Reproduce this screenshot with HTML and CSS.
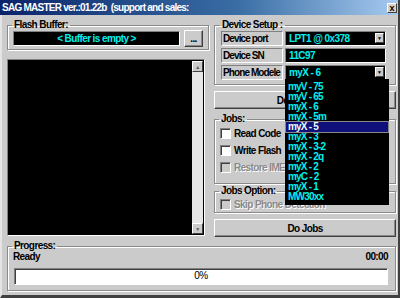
FILE: index.html
```html
<!DOCTYPE html>
<html lang="en">
<head>
<meta charset="UTF-8">
<title>SAG MASTER</title>
<link rel="stylesheet" href="styles.css">
</head>
<body>
<div class="window">
  <div class="titlebar">
    <span class="title">SAG MASTER ver.:01.22b&nbsp; (support and sales:</span>
    <span class="close">x</span>
  </div>
  <div class="client">
    <div class="top">
      <div class="leftCol">
        <fieldset class="group flash">
          <legend>Flash Buffer:</legend>
          <div class="flashRow">
            <div class="field">&lt; Buffer is empty &gt;</div>
            <button type="button" class="btn dots">...</button>
          </div>
        </fieldset>
        <div class="memo">
          <div class="scrollbar">
            <span class="arrow">&#9650;</span>
            <span class="arrow">&#9660;</span>
          </div>
        </div>
      </div>
      <div class="rightCol">
        <fieldset class="group device">
          <legend>Device Setup :</legend>
          <div class="devRows">
            <div class="cap">Device port</div>
            <div class="combo">LPT1 @ 0x378<span class="drop">&#9660;</span></div>
            <div class="cap">Device SN</div>
            <div class="combo">11C97</div>
            <div class="cap">Phone Modele</div>
            <div class="combo">myX - 6<span class="drop">&#9660;</span></div>
          </div>
        </fieldset>
        <button type="button" class="btn wide detect">Detect Phone</button>
        <fieldset class="group jobs">
          <legend>Jobs:</legend>
          <label class="check"><span class="box"></span>Read Code</label>
          <label class="check"><span class="box"></span>Write Flash</label>
          <label class="check off"><span class="box"></span>Restore IMEI</label>
        </fieldset>
        <fieldset class="group options">
          <legend>Jobs Option:</legend>
          <label class="check off"><span class="box"></span>Skip Phone Detection</label>
        </fieldset>
        <button type="button" class="btn wide dojobs">Do Jobs</button>
      </div>
    </div>
    <fieldset class="group progress">
      <legend>Progress:</legend>
      <div class="status"><span>Ready</span><span>00:00</span></div>
      <div class="bar">0%</div>
    </fieldset>
  </div>
  <ul class="dropList">
    <li>myV - 75</li>
    <li>myV - 65</li>
    <li>myX - 6</li>
    <li>myX - 5m</li>
    <li class="sel">myX - 5</li>
    <li>myX - 3</li>
    <li>myX - 3-2</li>
    <li>myX - 2q</li>
    <li>myX - 2</li>
    <li>myC - 2</li>
    <li>myX - 1</li>
    <li>MW30xx</li>
  </ul>
</div>
</body>
</html>
```

FILE: styles.css
```css
* { box-sizing:border-box; }
html, body { margin:0; padding:0; overflow:hidden; }
body { font-family:"Liberation Sans",Arial,sans-serif; font-size:10px; font-weight:bold; letter-spacing:-0.6px; color:#000; background:#c8c8c8; }
.window { position:relative; width:400px; height:298px; display:flex; flex-direction:column; background:#cbcbcb; border-right:2px solid #404040; border-bottom:3px solid #404040; border-left:2px solid #e4e4e4; }
.titlebar { height:15px; display:flex; align-items:center; justify-content:space-between; padding:0 1px 0 2px; margin-left:-2px; background:linear-gradient(90deg,#0a246a 0%,#3a6ea5 60%,#a6caf0 100%); color:#fff; }
.title { font-size:10px; letter-spacing:-0.75px; line-height:15px; white-space:nowrap; }
.close { width:10px; height:10px; background:#d4d0c8; color:#000; font-size:9px; letter-spacing:0; line-height:8px; text-align:center; border:1px solid; border-color:#fff #404040 #404040 #fff; }
.client { flex:1; display:flex; flex-direction:column; padding:5px 0 4px 5px; }
.top { display:grid; grid-template-columns:202px 182px; gap:5px; }
.leftCol, .rightCol { display:flex; flex-direction:column; }
.group { margin:0; padding:0 5px 2px 5px; border:1px solid #8a8a8a; box-shadow:1px 1px 0 #fff, inset 1px 1px 0 #fff; }
legend { padding:0 2px; margin-left:-1px; line-height:10px; height:10px; }
.flashRow { display:flex; align-items:center; gap:4px; height:17px; }
.field { width:167px; height:15px; background:#000; color:#00f0f0; text-align:center; line-height:14px; border:1px solid; border-color:#808080 #fff #fff #808080; }
.btn { font:inherit; letter-spacing:inherit; color:#000; background:#cbcbcb; border:1px solid; border-color:#fff #404040 #404040 #fff; box-shadow:inset -1px -1px 0 #888; padding:0; }
.dots { width:19px; height:17px; line-height:12px; }
.memo { flex:1; margin:9px 4px 1px 0; background:#000; border:1px solid; border-color:#808080 #fff #fff #808080; display:flex; justify-content:flex-end; padding:1px; }
.scrollbar { width:11px; background:#e6e6e6; display:flex; flex-direction:column; justify-content:space-between; }
.arrow { height:11px; background:#cbcbcb; color:#555; font-size:5px; line-height:10px; text-align:center; border:1px solid; border-color:#fff #404040 #404040 #fff; }
.device { padding:1px 9px 4px 6px; }
.devRows { display:grid; grid-template-columns:62px 101px; grid-auto-rows:15px; gap:2px; }
.cap { padding-left:1px; letter-spacing:-0.9px; line-height:13px; border:1px solid; border-color:#808080 #fff #fff #808080; white-space:nowrap; overflow:hidden; }
.combo { position:relative; background:#000; color:#00f0f0; padding-left:3px; line-height:13px; border:1px solid; border-color:#808080 #fff #fff #808080; }
.drop { position:absolute; right:1px; top:1px; width:9px; height:10px; background:#cbcbcb; color:#000; font-size:5px; letter-spacing:0; line-height:9px; text-align:center; border:1px solid; border-color:#fff #404040 #404040 #fff; }
.wide { height:18px; line-height:15px; }
.detect { margin-top:6px; }
.jobs { margin-top:5px; padding:1px 5px 7px 5px; }
.options { margin-top:2px; padding:0 5px 0 5px; }
.options .check { height:16px; }
.dojobs { margin-top:6px; }
.check { display:flex; align-items:center; gap:3px; height:17px; white-space:nowrap; }
.box { width:11px; height:11px; background:#fff; border:1px solid; border-color:#808080 #fff #fff #808080; box-shadow:inset 1px 1px 0 #404040; }
.check.off { color:#8a8a8a; text-shadow:1px 1px 0 #fff; }
.check.off .box { background:#cbcbcb; }
.progress { margin-top:4px; margin-right:2px; padding:0 7px 5px 5px; }
.status { display:flex; justify-content:space-between; line-height:12px; }
.bar { margin:5px 0 0 1px; height:17px; background:#fff; font-weight:normal; text-align:center; line-height:14px; border:1px solid; border-color:#808080 #fff #fff #808080; box-shadow:inset 1px 1px 0 #404040; }
.dropList { position:absolute; left:283px; top:79px; width:104px; height:126px; margin:0; padding:2px 0 0; list-style:none; background:#000; border:1px solid #000; }
.dropList li { height:10px; line-height:10px; padding-left:2px; font-size:10px; letter-spacing:-0.8px; color:#00f0f0; white-space:nowrap; }
.dropList li.sel { background:#10107a; color:#e8ffff; outline:1px solid #888; }
```
